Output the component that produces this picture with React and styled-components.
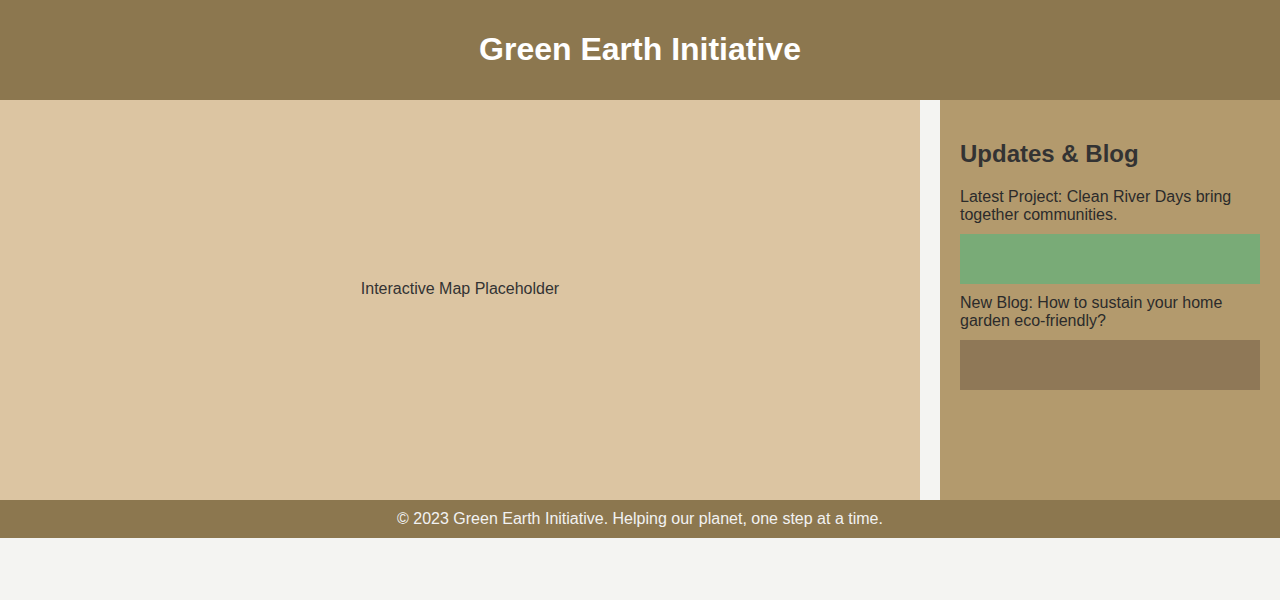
import React from "react";
import styled, { createGlobalStyle } from "styled-components";

const GlobalStyle = createGlobalStyle`
  body {
    margin: 0;
    background: #f4f4f2;
    font-family: "Liberation Sans", Arial, sans-serif;
    color: #333;
  }
`;

const Header = styled.header`
  height: 100px;
  box-sizing: border-box;
  padding-bottom: 2px;
  background: #8c774f;
  display: flex;
  align-items: center;
  justify-content: center;
  h1 {
    margin: 0;
    color: #fff;
    font-size: 32px;
    font-weight: bold;
  }
`;

const Main = styled.main`
  display: flex;
  gap: 20px;
  height: 400px;
`;

const Map = styled.section`
  flex: 1;
  background: #dcc5a2;
  display: flex;
  align-items: center;
  justify-content: center;
  padding-bottom: 23px;
  font-size: 16px;
  color: #333;
`;

const Sidebar = styled.aside`
  width: 300px;
  padding: 20px;
  background: #b39a6d;
  display: flex;
  flex-direction: column;
  gap: 10px;
  h2 {
    margin: 20px 0 10px;
    font-size: 24px;
    color: #333;
  }
  p {
    margin: 0;
    font-size: 16px;
    color: #2b2b2b;
  }
`;

const Thumb = styled.div`
  height: 50px;
  background: ${(p) => p.color};
`;

const Footer = styled.footer`
  background: #8c774f;
  color: #f2f2f2;
  text-align: center;
  padding: 10px;
  font-size: 16px;
`;

const posts = [
  { text: "Latest Project: Clean River Days bring together communities.", color: "#79ab77" },
  { text: "New Blog: How to sustain your home garden eco-friendly?", color: "#8f7857" },
];

export default function App() {
  return (
    <>
      <GlobalStyle />
      <Header>
        <h1>Green Earth Initiative</h1>
      </Header>
      <Main>
        <Map>Interactive Map Placeholder</Map>
        <Sidebar>
          <h2>Updates &amp; Blog</h2>
          {posts.map((p) => (
            <React.Fragment key={p.text}>
              <p>{p.text}</p>
              <Thumb color={p.color} />
            </React.Fragment>
          ))}
        </Sidebar>
      </Main>
      <Footer>© 2023 Green Earth Initiative. Helping our planet, one step at a time.</Footer>
    </>
  );
}
